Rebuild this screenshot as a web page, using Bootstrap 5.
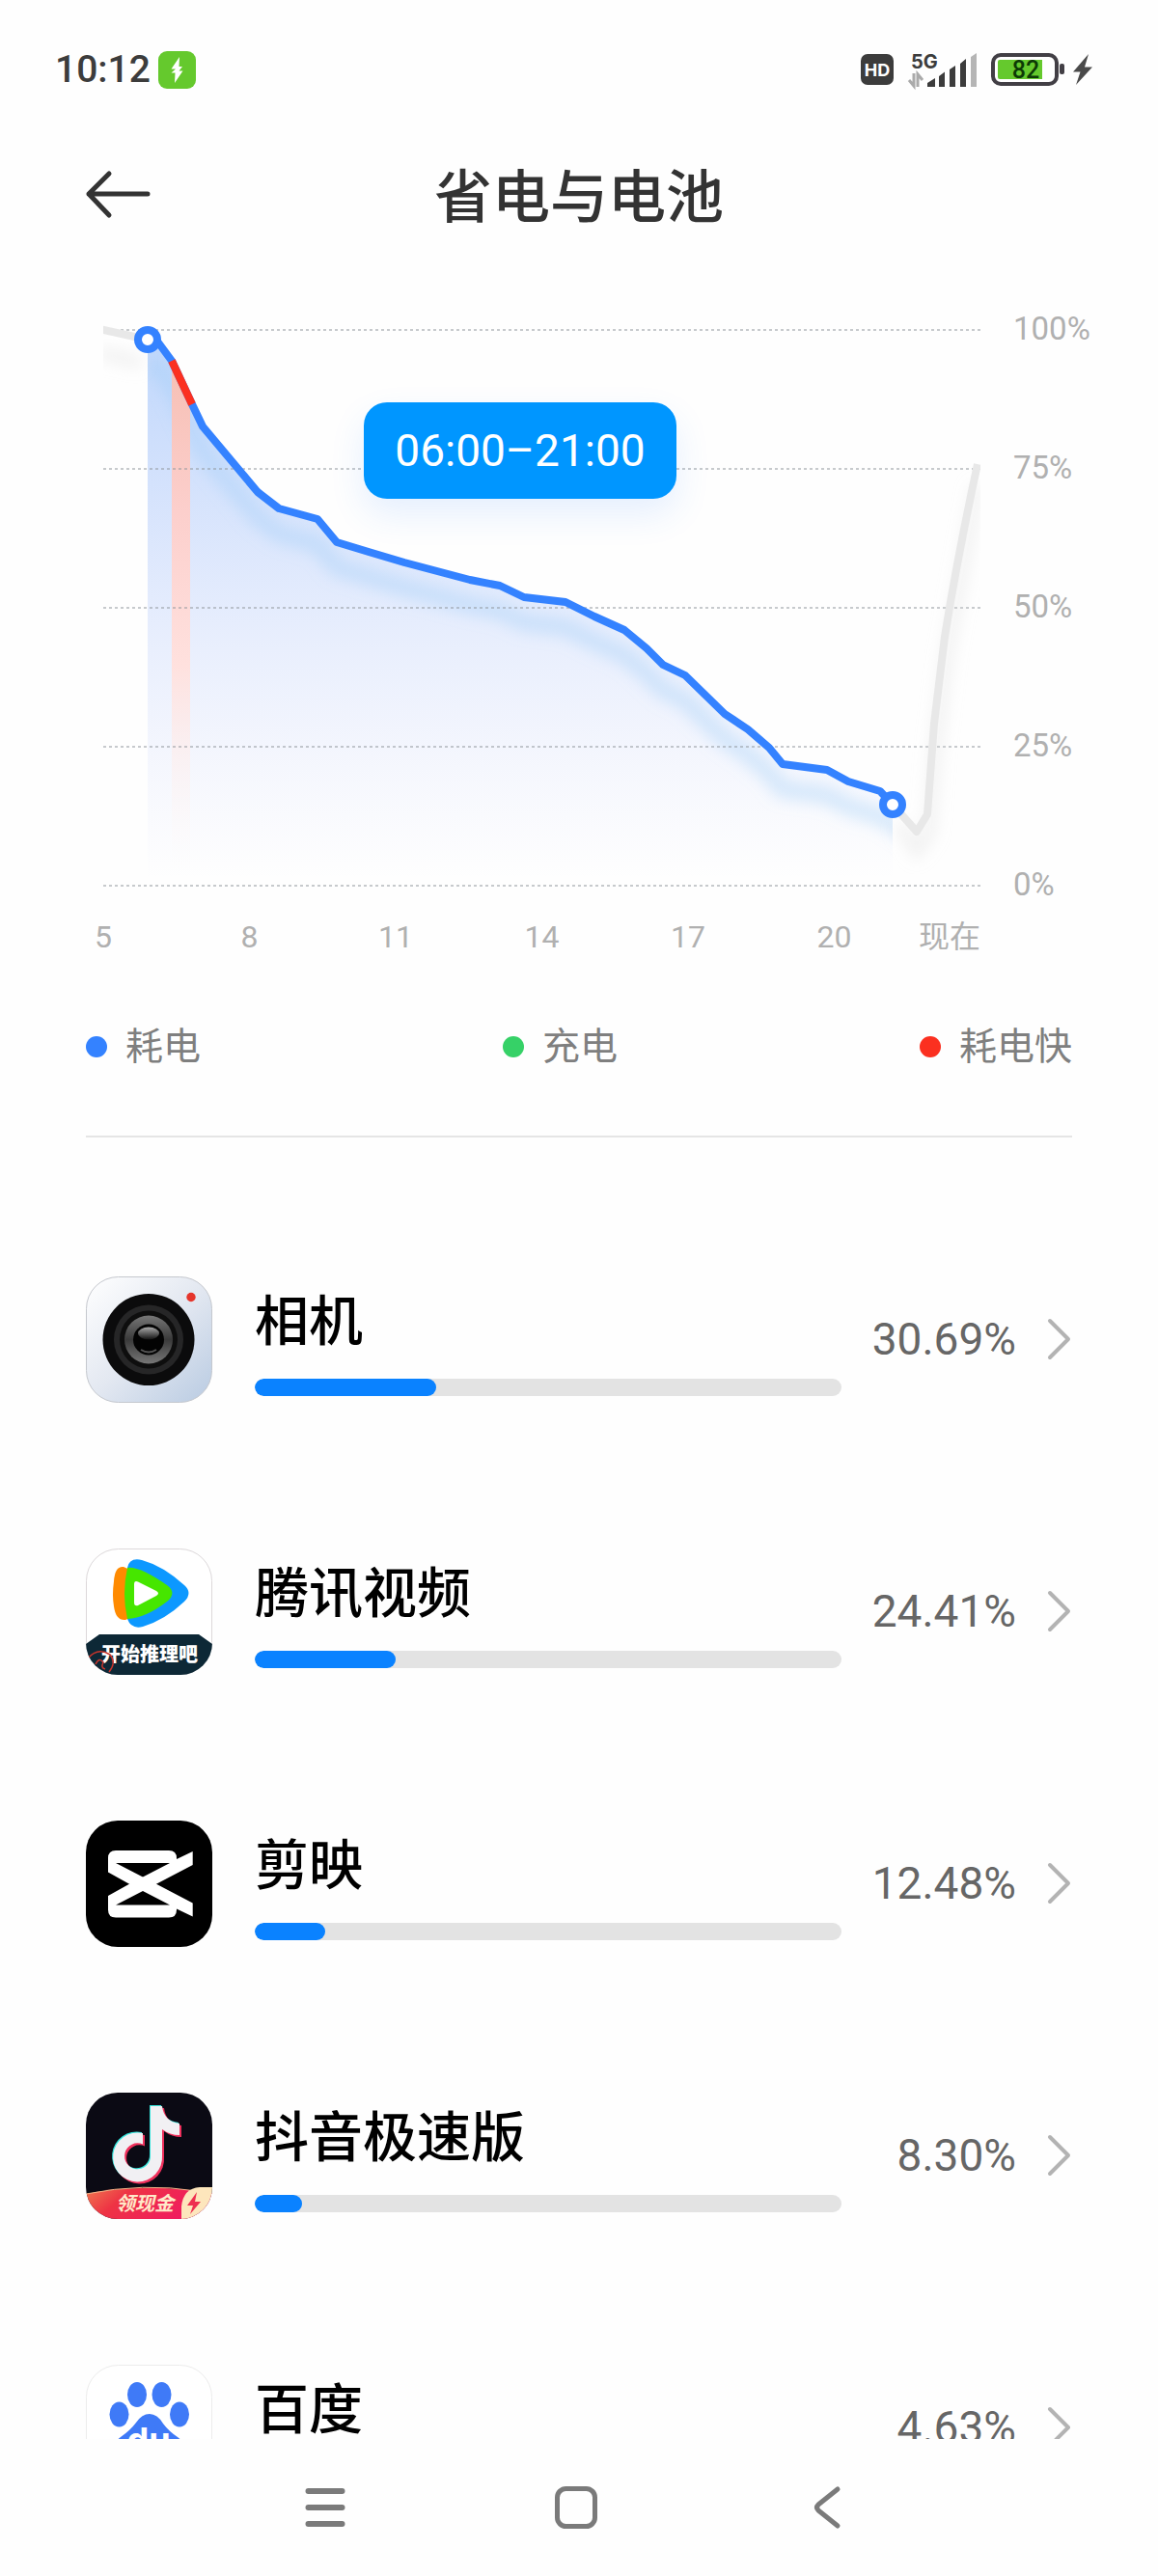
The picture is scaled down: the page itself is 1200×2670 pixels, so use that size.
<!DOCTYPE html>
<html lang="zh-CN">
<head>
<meta charset="utf-8">
<meta name="viewport" content="width=device-width, initial-scale=1">
<title>省电与电池</title>
<link href="https://cdn.jsdelivr.net/npm/bootstrap@5.3.0/dist/css/bootstrap.min.css" rel="stylesheet">
<style>
body{font-family:Roboto,"Noto Sans CJK SC",sans-serif;background:#fefefe;color:#000;height:100vh;overflow:hidden}
svg{display:block;flex-shrink:0;overflow:visible}
.status-bar{height:142px;padding:2px 67px 0 57px}
.clock{font-size:39px;font-weight:500;line-height:48px;color:#3c3c3c}
.signals{gap:14px}
.charging{margin-left:-6px}
.title-bar{height:122px;padding:0 89px}
.title-bar h1{font-size:60px;line-height:72px;font-weight:500;color:#333;padding-top:5px}
.side-slot{width:67px}
.chart-area{padding:78px 72px 0 107px}
.plot svg{width:100%;height:auto}
.axis-text{font-size:33px;line-height:48px;color:#b0b0b0}
.y-labels{width:112px}
.y-axis{margin:-25px 0 -23px;padding-left:34px}
.x-axis{display:grid;grid-template-columns:repeat(6,2fr) 1fr;margin-left:-8.3333%;margin-top:29px;font-size:32px}
.x-spacer{height:77px}
.range-tip{left:29.7%;top:13%;width:324px;height:100px;border-radius:24px;background:#0096ff;color:#fff;font-size:46px;line-height:100px;box-shadow:0 16px 36px rgba(52,130,255,.12)}
.legend-row{margin:60px 89px 0;font-size:39px;line-height:60px;color:#7f7f7f}
.legend-row li{gap:19px}
.dot{width:22px;height:22px}
.dot-use{background:#3482ff}.dot-charge{background:#36d167}.dot-fast{background:#fb3020}
.rule{height:2px;background:#e5e5e5;margin:62px 89px 68px}
.usage-list{padding:0 89px}
.usage-item{height:282px;flex-shrink:0;color:#000}
.usage-info{margin-left:44px;padding-top:4px}
.usage-name{font-size:56px;line-height:72px;font-weight:500}
.usage-item .progress{height:18px;border-radius:9px;background:#e3e3e3;margin-top:23px}
.usage-item .progress-bar{border-radius:9px;background:#0a82ff}
.usage-share{width:181px;font-size:46px;line-height:60px;color:#666}
.chev{margin-left:32px}
.nav-keys{height:142px;background:#fefefe;padding-right:6px}
.nav-keys button{width:260px;height:142px;border-radius:0}
</style>
</head>
<body class="d-flex flex-column">
<div class="status-bar d-flex align-items-center justify-content-between flex-shrink-0">
  <div class="d-flex align-items-center gap-2">
    <span class="clock">10:12</span>
    <svg width="39" height="39" viewBox="0 0 39 39"><rect width="39" height="39" rx="9" fill="#65c92d"/><path d="M22 6 13.500 18.500H18L13.500 22.500H17.500L17 33 25.500 20.500H21.500L25 16H21.500Z" fill="#fff"/></svg>
  </div>
  <div class="signals d-flex align-items-center">
    <svg width="34" height="32" viewBox="0 0 34 32"><rect width="34" height="32" rx="7" fill="#3c3c3c"/><text x="17" y="23" text-anchor="middle" font-family="Inter,sans-serif" font-weight="700" font-size="18" fill="#fff">HD</text></svg>
    <svg width="73" height="36" viewBox="0 0 73 36"><text x="4" y="17" font-family="Inter,sans-serif" font-weight="700" font-size="20" fill="#3c3c3c">5G</text>
      <g fill="none" stroke="#aaa" stroke-width="3"><path d="M7 22V35L2 29M11 36V23L16 29"/></g>
      <g fill="#3c3c3c"><path d="M21 36V32L29 27V36ZM33 36V25L39 20.500V36ZM44 36V18L50 14V36ZM55 36V12L61 7V36Z"/><path d="M66 36V5L72 1V36Z" fill="#b5b5b5"/></g></svg>
    <svg width="76" height="34" viewBox="0 0 76 34"><rect x="2" y="2" width="66" height="30" rx="8" fill="#fff" stroke="#423f45" stroke-width="4"/><path d="M9 7H53V27H9Q7 27 7 25V9Q7 7 9 7Z" fill="#65c92d"/><rect x="71" y="11" width="5" height="11" rx="2" fill="#423f45"/><text x="36" y="26" text-anchor="middle" font-family="Roboto,sans-serif" font-weight="500" font-size="25" fill="#0c3a05">82</text></svg>
    <svg width="22" height="34" viewBox="0 0 22 34" class="charging"><path d="M17 1 1 19.500H8.500L4 33 21 14.500H13Z" fill="#4a4a4a"/></svg>
  </div>
</div>

<header class="title-bar d-flex align-items-center justify-content-between flex-shrink-0">
  <button type="button" class="btn p-0 border-0 side-slot" aria-label="返回"><svg width="67" height="50" viewBox="0 0 67 50"><path d="M24 2 3 23 24 45M3 23H64" fill="none" stroke="#333" stroke-width="5" stroke-linecap="round" stroke-linejoin="round"/></svg></button>
  <h1 class="m-0">省电与电池</h1>
  <span class="side-slot"></span>
</header>

<main class="flex-grow-1 overflow-hidden d-flex flex-column">
  <section class="chart-area d-flex flex-shrink-0">
    <div class="flex-grow-1">
      <div class="plot position-relative">
        <svg viewBox="0 0 909 576" role="img" aria-label="电量曲线">
          <defs>
            <linearGradient id="area" x1="0" y1="10" x2="0" y2="570" gradientUnits="userSpaceOnUse"><stop offset="0" stop-color="#2f7df6" stop-opacity=".3"/><stop offset=".5" stop-color="#3a74f5" stop-opacity=".13"/><stop offset="1" stop-color="#6a7ff5" stop-opacity="0"/></linearGradient>
            <linearGradient id="hot" x1="0" y1="30" x2="0" y2="560" gradientUnits="userSpaceOnUse"><stop offset="0" stop-color="#f6bfb4"/><stop offset=".3" stop-color="#fccfcc"/><stop offset=".6" stop-color="#ffe1de"/><stop offset="1" stop-color="#fffaf8" stop-opacity="0"/></linearGradient>
            <filter id="soft" x="-10%" y="-10%" width="120%" height="130%"><feGaussianBlur stdDeviation="8"/></filter>
            <clipPath id="under"><path d="M46 10 57 13 71 32 92 77 103 100 160 168 182 185 222 196 242 220 275 230 312 241 380 259 411 265 436 277 479 282 509 297 540 311 563 330 580 347 603 358 644 398 668 414 690 433 704 450 750 456 772 468 805 478 818 492V576H46Z"/></clipPath>
            <clipPath id="plotbox"><rect x="0" y="-10" width="909" height="590"/></clipPath>
          </defs>
          <g clip-path="url(#under)">
            <rect x="46" width="772" height="576" fill="url(#area)"/>
            <path transform="translate(0 26)" filter="url(#soft)" fill="none" stroke="#9ccbf7" stroke-opacity=".38" stroke-width="18" d="M46 10 57 13 71 32 92 77 103 100 160 168 182 185 222 196 242 220 275 230 312 241 380 259 411 265 436 277 479 282 509 297 540 311 563 330 580 347 603 358 644 398 668 414 690 433 704 450 750 456 772 468 805 478 840 500"/>
            <rect x="71" width="19" height="576" fill="url(#hot)"/>
          </g>
          <path d="M0 0H909M0 144H909M0 288H909M0 432H909M0 576H909" stroke="#8f959c" stroke-opacity=".5" stroke-width="2" stroke-dasharray="3 3"/>
          <g clip-path="url(#plotbox)" fill="none">
            <g filter="url(#soft)" stroke="#ddd" stroke-opacity=".4" stroke-width="12"><path d="M-4 24 40 34"/><path d="M825 512 843 540 856 522 862 440 874 340 906 160"/></g>
            <path d="M-4 -1 46 10M818 492 843 520 854 502 861 408 872 318Q885 236 906 139" stroke="#e8e8e8" stroke-width="8" stroke-linejoin="round"/>
          </g>
          <path d="M46 10 57 13 71 32 92 77 103 100 160 168 182 185 222 196 242 220 275 230 312 241 380 259 411 265 436 277 479 282 509 297 540 311 563 330 580 347 603 358 644 398 668 414 690 433 704 450 750 456 772 468 805 478 818 492" fill="none" stroke="#3482ff" stroke-width="8" stroke-linejoin="round"/>
          <path d="M71 32 92 77" stroke="#fb3020" stroke-width="8"/>
          <g fill="#fff" stroke="#3482ff" stroke-width="8"><circle cx="46" cy="10" r="10"/><circle cx="818" cy="492" r="10"/></g>
        </svg>
        <div class="range-tip position-absolute text-center">06:00–21:00</div>
      </div>
      <div class="x-axis axis-text text-center"><span>5</span><span>8</span><span>11</span><span>14</span><span>17</span><span>20</span><span class="text-end text-nowrap">现在</span></div>
    </div>
    <div class="y-labels d-flex flex-column flex-shrink-0">
      <div class="y-axis axis-text d-flex flex-column justify-content-between flex-grow-1"><span>100%</span><span>75%</span><span>50%</span><span>25%</span><span>0%</span></div>
      <div class="x-spacer"></div>
    </div>
  </section>

  <ul class="legend-row list-unstyled d-flex justify-content-between flex-shrink-0">
    <li class="d-flex align-items-center"><span class="dot dot-use rounded-circle"></span>耗电</li>
    <li class="d-flex align-items-center"><span class="dot dot-charge rounded-circle"></span>充电</li>
    <li class="d-flex align-items-center"><span class="dot dot-fast rounded-circle"></span>耗电快</li>
  </ul>
  <div class="rule flex-shrink-0"></div>

  <nav class="usage-list d-flex flex-column" aria-label="应用耗电">
    <a href="#" class="usage-item d-flex align-items-center text-decoration-none">
      <svg width="131" height="131" viewBox="0 0 131 131">
        <defs><linearGradient id="cam" x1="0" y1="0" x2="1" y2="1"><stop offset="0" stop-color="#fff"/><stop offset=".5" stop-color="#e3e8f1"/><stop offset="1" stop-color="#b9cbe2"/></linearGradient>
        <linearGradient id="ringg" x1="0" y1="0" x2="0" y2="1"><stop offset="0" stop-color="#777"/><stop offset=".5" stop-color="#3a3a3a"/><stop offset="1" stop-color="#777"/></linearGradient>
        <linearGradient id="shine" x1="0" y1="0" x2="0" y2="1"><stop offset="0" stop-color="#aaa"/><stop offset="1" stop-color="#111"/></linearGradient></defs>
        <rect x=".5" y=".5" width="130" height="130" rx="33" fill="url(#cam)" stroke="#c5c8ce"/>
        <circle cx="65" cy="65.500" r="47.500" fill="#0b0b0c"/><circle cx="65" cy="65.500" r="36" fill="#262627"/><circle cx="65" cy="65.500" r="30" fill="#0e0e0e"/><circle cx="65" cy="65.500" r="25" fill="url(#ringg)"/><circle cx="65" cy="65.500" r="16" fill="#030303"/><ellipse cx="65" cy="59" rx="11" ry="6.500" fill="url(#shine)"/><path d="M57 76Q65 81 73 76" stroke="#555" stroke-width="2" fill="none"/><circle cx="109" cy="21.500" r="4.700" fill="#e5352b"/></svg>
      <div class="usage-info flex-grow-1"><div class="usage-name">相机</div><div class="progress" role="progressbar" aria-label="相机"><div class="progress-bar" style="width:31%"></div></div></div>
      <span class="usage-share text-end">30.69%</span>
      <svg class="chev" width="26" height="44" viewBox="0 0 26 44"><path d="M3 3 22 22 3 41" fill="none" stroke="#b3b3b3" stroke-width="4" stroke-linecap="round" stroke-linejoin="round"/></svg>
    </a>
    <a href="#" class="usage-item d-flex align-items-center text-decoration-none">
      <svg width="131" height="131" viewBox="0 0 131 131">
        <clipPath id="rc"><rect width="131" height="131" rx="33"/></clipPath>
        <rect x=".5" y=".5" width="130" height="130" rx="33" fill="#fff" stroke="#dcd8da"/>
        <path d="M39 19Q30 18 29 34Q27 48 29 60Q31 75 41 74L50 70V24Z" fill="#ff8a00"/>
        <path d="M43 20Q45 9 58 12Q80 18 102 38Q111 46 102 55Q82 74 59 81Q47 84 43 73Z" fill="#0c98ff"/>
        <path d="M43 20Q55 18 84 38Q95 46 84 55Q62 72 43 73Q37 47 43 20Z" fill="#46e600"/>
        <path d="M50 37Q50 33 54 34.500L73 44Q77 46.500 73 49L54 59Q50 60 50 56Z" fill="#fff"/>
        <g clip-path="url(#rc)"><path d="M0 99 14 89H117L131 99V131H0Z" fill="#0d2836"/>
        <text x="66" y="117" text-anchor="middle" font-family="'Noto Sans CJK SC',sans-serif" font-weight="900" font-size="20" fill="#fff">开始推理吧</text>
        <path d="M2 114Q12 102 25 110Q32 118 24 128M10 120Q14 112 18 118Q15 124 20 125M11 123 17 130" fill="none" stroke="#c8352c" stroke-width="1.500"/></g></svg>
      <div class="usage-info flex-grow-1"><div class="usage-name">腾讯视频</div><div class="progress" role="progressbar" aria-label="腾讯视频"><div class="progress-bar" style="width:24%"></div></div></div>
      <span class="usage-share text-end">24.41%</span>
      <svg class="chev" width="26" height="44" viewBox="0 0 26 44"><path d="M3 3 22 22 3 41" fill="none" stroke="#b3b3b3" stroke-width="4" stroke-linecap="round" stroke-linejoin="round"/></svg>
    </a>
    <a href="#" class="usage-item d-flex align-items-center text-decoration-none">
      <svg width="131" height="131" viewBox="0 0 131 131"><rect width="131" height="131" rx="33" fill="#000"/>
        <g fill="#fff"><path d="M23 53.500V39Q23 31 31 31H86Q94 31 94 39V40L110.700 32V46L73 65.700 59 73 45 65.700ZM31 44 59 58.500 87 44Z" fill-rule="evenodd"/><path d="M23 77.900V92.400Q23 100.400 31 100.400H86Q94 100.400 94 92.400V91.400L110.700 99.400V85.400L73 65.700 59 58.400 45 65.700ZM31 87.400 59 72.900 87 87.400Z" fill-rule="evenodd"/></g></svg>
      <div class="usage-info flex-grow-1"><div class="usage-name">剪映</div><div class="progress" role="progressbar" aria-label="剪映"><div class="progress-bar" style="width:12%"></div></div></div>
      <span class="usage-share text-end">12.48%</span>
      <svg class="chev" width="26" height="44" viewBox="0 0 26 44"><path d="M3 3 22 22 3 41" fill="none" stroke="#b3b3b3" stroke-width="4" stroke-linecap="round" stroke-linejoin="round"/></svg>
    </a>
    <a href="#" class="usage-item d-flex align-items-center text-decoration-none">
      <svg width="131" height="131" viewBox="0 0 131 131">
        <defs><linearGradient id="cash" x1="0" y1="0" x2="1" y2=".3"><stop offset="0" stop-color="#ef7a50"/><stop offset=".35" stop-color="#ee3344"/><stop offset="1" stop-color="#f01a62"/></linearGradient>
        <path id="note" d="M59 43V54.500A13.500 13.500 0 1 0 67 66V15H79Q81 31 97 33V45Q87 45 79 39V66A25.500 25.500 0 1 1 59 43Z"/></defs>
        <rect width="131" height="131" rx="33" fill="#0b0a14"/>
        <use href="#note" x="-1" y="-2" fill="#33e5dc"/><use href="#note" x="2" y="1" fill="#f0305c"/><use href="#note" y="-1" fill="#f1f0f3"/>
        <g clip-path="url(#rc)"><path d="M0 105Q60 93 131 104V131H0Z" fill="url(#cash)"/><path d="M0 105Q60 93 115 102" fill="none" stroke="#f5b58a"/>
        <path d="M99 131V118Q101 99 118 98H131V131Z" fill="#fde6bc"/><path d="M115 103 105 117H111L108 126 119 113H113Z" fill="#ee2f50"/>
        <text x="61" y="122" text-anchor="middle" font-family="'Noto Sans CJK SC',sans-serif" font-weight="700" font-style="italic" font-size="20" fill="#ffe9c9">领现金</text></g></svg>
      <div class="usage-info flex-grow-1"><div class="usage-name">抖音极速版</div><div class="progress" role="progressbar" aria-label="抖音极速版"><div class="progress-bar" style="width:8%"></div></div></div>
      <span class="usage-share text-end">8.30%</span>
      <svg class="chev" width="26" height="44" viewBox="0 0 26 44"><path d="M3 3 22 22 3 41" fill="none" stroke="#b3b3b3" stroke-width="4" stroke-linecap="round" stroke-linejoin="round"/></svg>
    </a>
    <a href="#" class="usage-item d-flex align-items-center text-decoration-none">
      <svg width="131" height="131" viewBox="0 0 131 131"><rect x=".5" y=".5" width="130" height="130" rx="33" fill="#fff" stroke="#ececec"/>
        <g fill="#3f7af7"><ellipse cx="53" cy="31" rx="10" ry="13"/><ellipse cx="78.500" cy="31" rx="10" ry="13"/><ellipse cx="34.500" cy="51.500" rx="10" ry="13"/><ellipse cx="97" cy="51.500" rx="10" ry="13"/><path d="M66 51Q74 51 80 61Q86 69 95 75Q107 84 105 97Q102 112 86 110Q66 106 46 110Q29 112 26 97Q24 84 36 75Q46 68 52 60Q58 51 66 51Z"/></g>
        <text x="65" y="91" text-anchor="middle" font-family="Inter,sans-serif" font-weight="700" font-size="36" fill="#fff">du</text></svg>
      <div class="usage-info flex-grow-1"><div class="usage-name">百度</div><div class="progress" role="progressbar" aria-label="百度"><div class="progress-bar" style="width:4%"></div></div></div>
      <span class="usage-share text-end">4.63%</span>
      <svg class="chev" width="26" height="44" viewBox="0 0 26 44"><path d="M3 3 22 22 3 41" fill="none" stroke="#b3b3b3" stroke-width="4" stroke-linecap="round" stroke-linejoin="round"/></svg>
    </a>
  </nav>
</main>

<footer class="nav-keys d-flex justify-content-center flex-shrink-0">
  <button type="button" class="btn border-0 p-0 d-flex align-items-center justify-content-center" aria-label="菜单"><svg width="42" height="44" viewBox="0 0 42 44"><path d="M3.500 5H38.500M3.500 22H38.500M3.500 39H38.500" stroke="#7a7a7a" stroke-width="6" stroke-linecap="round"/></svg></button>
  <button type="button" class="btn border-0 p-0 d-flex align-items-center justify-content-center" aria-label="主页"><svg width="44" height="44" viewBox="0 0 44 44"><rect x="2.500" y="2.500" width="39" height="39" rx="9" fill="none" stroke="#7a7a7a" stroke-width="5"/></svg></button>
  <button type="button" class="btn border-0 p-0 d-flex align-items-center justify-content-center" aria-label="返回"><svg width="28" height="44" viewBox="0 0 28 44"><path d="M25 3 5 19Q2 22 5 25L25 41" fill="none" stroke="#7a7a7a" stroke-width="5" stroke-linecap="round" stroke-linejoin="round"/></svg></button>
</footer>
<script src="https://cdn.jsdelivr.net/npm/bootstrap@5.3.0/dist/js/bootstrap.bundle.min.js"></script>
</body>
</html>
